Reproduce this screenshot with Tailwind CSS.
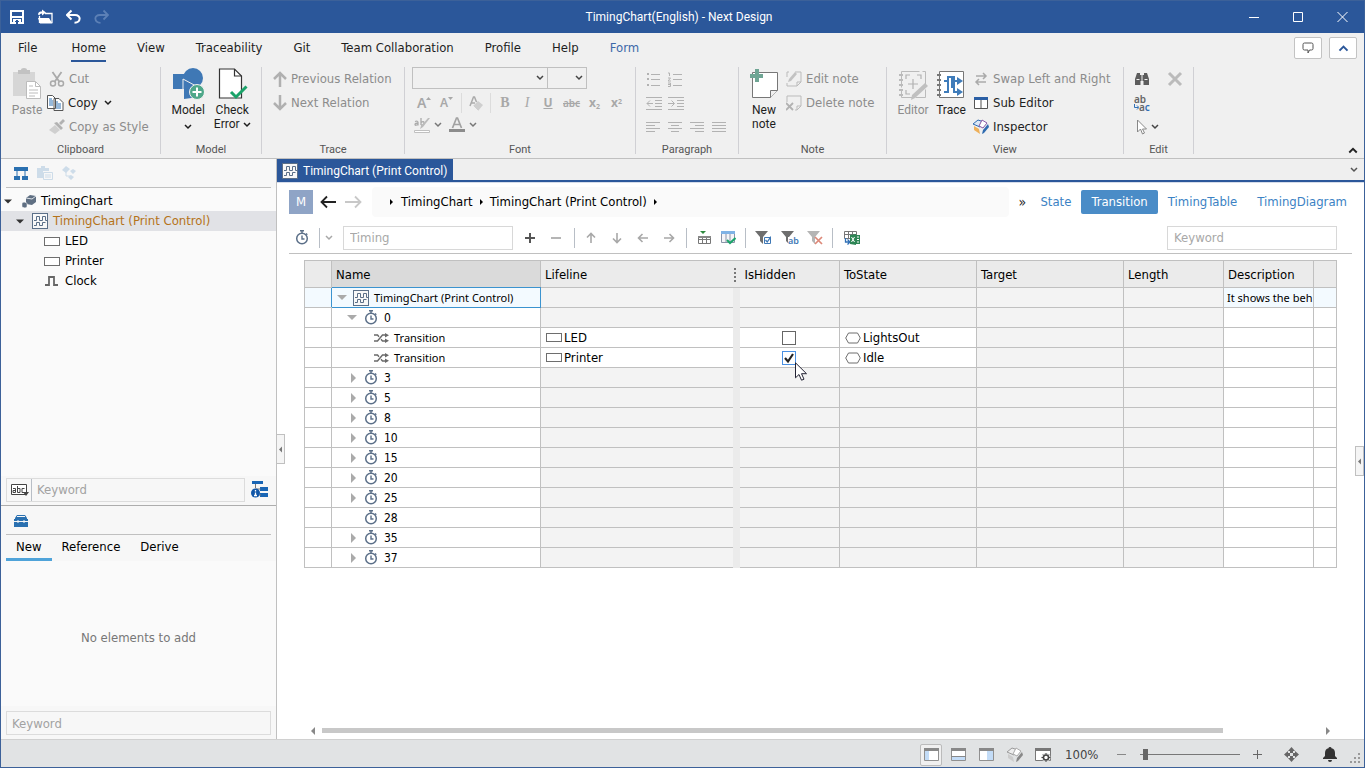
<!DOCTYPE html>
<html lang="en">
<head>
<meta charset="utf-8">
<title>TimingChart(English) - Next Design</title>
<script src="https://cdn.jsdelivr.net/npm/@tailwindcss/browser@4"></script>
</head>
<body class="flex h-screen flex-col overflow-hidden border border-[#3c6199] bg-white font-['DejaVu_Sans_Condensed','DejaVu_Sans','Noto_Sans',sans-serif] text-[13px] leading-5 text-[#1e1e1e]">

<svg class="hidden" aria-hidden="true">
  <symbol id="chev" viewBox="0 0 8 6"><path d="M1 1l3 3 3-3" fill="none" stroke="currentColor" stroke-width="1.5"/></symbol>
  <symbol id="chart" viewBox="0 0 16 16"><rect x=".5" y=".5" width="15" height="15" fill="#f8f8f8" stroke="#5b6f88"/><path d="M2 7.500h2.500v-4h3v4h3v-4h3v4H15M2 12.500h2.500v-3h3v3h3v-3h3" fill="none" stroke="#5b6f88"/></symbol>
  <symbol id="box" viewBox="0 0 16 9"><rect x=".5" y=".5" width="15" height="8" fill="#fff" stroke="#6e6e6e"/></symbol>
  <symbol id="hex" viewBox="0 0 16 12"><path d="M.7 6L3.500 1h9L15.300 6l-2.800 5h-9z" fill="#fff" stroke="#6e6e6e"/></symbol>
  <symbol id="watch" viewBox="0 0 14 15"><circle cx="7" cy="8.500" r="5.300" fill="none" stroke="#5b6f88" stroke-width="1.500"/><path d="M5 .8h4M7 1v2M11 3.500l1.300 1.300M7 5.500v3.500h2.500" fill="none" stroke="#5b6f88" stroke-width="1.400"/></symbol>
  <symbol id="shuffle" viewBox="0 0 15 10"><path d="M0 2h3.500l1.500 1.800M0 8h3.500l5-6H12M7 6.200L8.500 8H12" fill="none" stroke="#6a6a6a" stroke-width="1.400"/><path d="M11 0l4 2.200-4 2.300zM11 5.500l4 2.300-4 2.200z" fill="#6a6a6a"/></symbol>
  <symbol id="down" viewBox="0 0 10 5"><path d="M0 0h10L5 5z" fill="currentColor"/></symbol>
  <symbol id="right" viewBox="0 0 5 10"><path d="M0 0v10l5-5z" fill="currentColor"/></symbol>
  <symbol id="arrow" viewBox="0 0 12 12"><path d="M6 11V1.500M2 5.500l4-4 4 4" fill="none" stroke="currentColor" stroke-width="1.600"/></symbol>
  <symbol id="funnel" viewBox="0 0 16 15"><path d="M0 1h13L8 7v7L5 11V7z" fill="currentColor"/></symbol>
</svg>

<!-- Title bar -->
<header class="flex h-8 shrink-0 items-center bg-[#2b579a] text-white">
  <div class="flex flex-1 items-center gap-[14px] pl-[9px]">
    <button aria-label="Save" class="h-4 w-[14px]"><svg viewBox="0 0 14 16" class="h-4 w-[14px]"><path d="M1 2h12v12H1z" fill="none" stroke="#fff" stroke-width="2"/><path d="M1 8h12M4 14v-3h6v3" fill="none" stroke="#fff" stroke-width="2"/><path d="M6 11h2v4H6z" fill="#2b579a"/></svg></button>
    <button aria-label="Open" class="h-4 w-[15px]"><svg viewBox="0 0 15 16" class="h-4 w-[15px]"><path d="M1.500 14V7M7 4.500h7V14" fill="none" stroke="#fff" stroke-width="1.300"/><path d="M0 9h11l3.500 5.500H2zM0 5.500C0 3 2 2.500 4 2.500V.5l4 3-4 3v-2C2 4.500 1.500 5.500 1.500 6.500z" fill="#fff"/></svg></button>
    <button aria-label="Undo" class="-ml-px h-4 w-[15px]"><svg viewBox="0 0 15 16" class="h-4 w-[15px]"><path d="M1.500 6H9c6.500 0 6 7.500-.5 7.800M5.500 1.500L1 6l4.500 4.500" fill="none" stroke="#fff" stroke-width="2"/></svg></button>
    <button aria-label="Redo" disabled class="-ml-px h-4 w-[15px]"><svg viewBox="0 0 15 16" class="h-4 w-[15px]"><path d="M13.500 6H6c-6.500 0-6 7.500.5 7.800M9.500 1.500L14 6l-4.500 4.500" fill="none" stroke="#5c80b6" stroke-width="1.800"/></svg></button>
  </div>
  <h1 class="font-[Roboto,sans-serif] text-xs">TimingChart(English) - Next Design</h1>
  <div class="flex flex-1 items-center justify-end gap-[34px] pr-4">
    <button aria-label="Minimize" class="h-3 w-[10px]"><svg viewBox="0 0 10 12" class="h-3 w-[10px]"><path d="M0 6.500h10" stroke="#fff"/></svg></button>
    <button aria-label="Maximize" class="h-3 w-[10px]"><svg viewBox="0 0 10 12" class="h-3 w-[10px]"><path d="M.5 1.500h9v9h-9z" stroke="#fff" fill="none"/></svg></button>
    <button aria-label="Close" class="h-3 w-[11px]"><svg viewBox="0 0 11 12" class="h-3 w-[11px]"><path d="M.5 1l10 10M10.500 1l-10 10" stroke="#fff"/></svg></button>
  </div>
</header>

<!-- Menu tabs -->
<nav class="flex h-[29px] shrink-0 items-start bg-[#f0f0f0]">
  <div class="flex flex-1 gap-[31px] pl-[17px]">
    <button class="h-[30px]">File</button>
    <button class="ml-[3px] h-[30px] border-b-3 border-[#2b579a] pt-[3px]">Home</button>
    <button class="h-[30px]">View</button>
    <button class="h-[30px]">Traceability</button>
    <button class="h-[30px]">Git</button>
    <button class="h-[30px]">Team Collaboration</button>
    <button class="h-[30px]">Profile</button>
    <button class="h-[30px]">Help</button>
    <button class="h-[30px] text-[#3d68a8]">Form</button>
  </div>
  <div class="flex gap-[7px] pt-1 pr-[7px]">
    <button aria-label="Comments" class="flex h-[22px] w-7 items-center justify-center rounded-xs border border-[#c3c3c3] bg-white"><svg viewBox="0 0 12 12" class="size-3"><path d="M3 1h6.500q1.500 0 1.500 1.500v4Q11 8 9.500 8H7.500L6 11V8H2.500Q1 8 1 6.500v-4Q1 1 2.500 1z" fill="none" stroke="#555"/></svg></button>
    <button aria-label="Collapse" class="flex h-[22px] w-7 items-center justify-center rounded-xs border border-[#c3c3c3] bg-white text-[#2b579a]"><svg class="h-2 w-[11px] rotate-180"><use href="#chev"/></svg></button>
  </div>
</nav>

<!-- Ribbon -->
<section class="flex h-[97px] shrink-0 border-b border-[#c0c0c0] bg-[#f0f0f0] pt-[5px] pb-1 text-[#8c8c8c]">
  <div class="flex w-[160px] flex-col border-r border-[#d0d0d4]">
    <div class="flex flex-1 pl-3">
      <button disabled class="flex w-7 flex-col items-center gap-[3px] pt-px font-[Roboto,sans-serif] text-xs leading-[14px]">
        <svg viewBox="0 0 28 32" class="h-8 w-7"><path d="M0 4h22v24H0z" fill="#d6d6d6"/><path d="M5 2h3q0-2 3-2t3 2h3v4H5z" fill="#c2c2c2"/><path d="M13.500 13.500h9l5 5v12h-14z" fill="#fff" stroke="#bcbcbc"/><path d="M22.500 13.500v5h5M16 18h4M16 22h9M16 25h9M16 28h6" fill="none" stroke="#bcbcbc"/></svg>Paste</button>
      <div class="flex flex-col pl-2">
        <button disabled class="flex h-6 items-center gap-1"><svg viewBox="0 0 16 16" class="size-4"><circle cx="4" cy="12.500" r="2.500" fill="none" stroke="#aaa" stroke-width="1.500"/><circle cx="12" cy="12.500" r="2.500" fill="none" stroke="#aaa" stroke-width="1.500"/><path d="M3.500 1l7 10M12.500 1l-7 10" stroke="#aaa" stroke-width="1.800"/></svg>Cut</button>
        <button class="-ml-[2px] flex h-6 items-center gap-1 text-[#1e1e1e]"><svg viewBox="0 0 17 16" class="h-4 w-[17px]"><path d="M.5.5h5l3 3v10h-8zM7 3.500h5l4 4v8H7z" fill="#fff" stroke="#555"/><path d="M2 4h3M2 6h4M2 8h4M2 10h4M9 7h2M9 9h5M9 11h5M9 13h5" stroke="#2f72b5"/></svg>Copy<svg class="ml-[2px] h-[6px] w-2"><use href="#chev"/></svg></button>
        <button disabled class="flex h-6 items-center gap-1"><svg viewBox="0 0 16 16" class="size-4"><path d="M0 11l6-5 5 5-5 4z" fill="#cfcfcf"/><path d="M5 4l3-1 6 6-2 2zM10 4l4-4 2 2-4 4z" fill="#b2b2b2"/></svg>Copy as Style</button>
      </div>
    </div>
    <div class="-mb-1 text-center font-[Roboto,sans-serif] text-[11px] leading-4 text-[#555]">Clipboard</div>
  </div>
  <div class="flex w-[101px] flex-col border-r border-[#d0d0d4] text-[#1e1e1e]">
    <div class="flex flex-1 items-start justify-center gap-[9px]">
      <button class="flex flex-col items-center gap-[3px] pt-px font-[Roboto,sans-serif] text-xs leading-[14px]"><svg viewBox="0 0 32 32" class="size-8"><circle cx="21" cy="10" r="10" fill="#3f78b5"/><path d="M1 6h14v15H1zM12 17l10-5 5 17-15 2z" fill="#3f78b5"/><path d="M11 22V11l13 7" fill="none" stroke="#f0f0f0"/><circle cx="25" cy="24" r="7.500" fill="#4fa88a" stroke="#f0f0f0"/><path d="M25 19.500v9M20.500 24h9" stroke="#fff" stroke-width="2"/></svg>Model<svg class="mt-1 h-[6px] w-2"><use href="#chev"/></svg></button>
      <button class="flex flex-col items-center gap-[3px] pt-px font-[Roboto,sans-serif] text-xs leading-[14px]"><svg viewBox="0 0 32 32" class="size-8"><path d="M3.500 1h15l7 7v22h-22z" fill="#fff" stroke="#333" stroke-width="1.200"/><path d="M18.500 1v7h7" fill="none" stroke="#333" stroke-width="1.200"/><path d="M15 24l5 5L30.500 18.500" fill="none" stroke="#1ba36a" stroke-width="3"/></svg><span class="whitespace-nowrap">Check<br>Error <svg class="inline h-[6px] w-2"><use href="#chev"/></svg></span></button>
    </div>
    <div class="-mb-1 text-center font-[Roboto,sans-serif] text-[11px] leading-4 text-[#555]">Model</div>
  </div>
  <div class="flex w-[143px] flex-col border-r border-[#d0d0d4]">
    <div class="flex flex-1 flex-col items-start pl-[11px]">
      <button disabled class="flex h-6 items-center gap-1"><svg viewBox="0 0 14 16" class="h-4 w-[14px]"><path d="M7 16V2M1 8l6-6 6 6" fill="none" stroke="#b0b0b0" stroke-width="2.500"/></svg>Previous Relation</button>
      <button disabled class="flex h-6 items-center gap-1"><svg viewBox="0 0 14 16" class="h-4 w-[14px]"><path d="M7 0v14M1 8l6 6 6-6" fill="none" stroke="#b0b0b0" stroke-width="2.500"/></svg>Next Relation</button>
    </div>
    <div class="-mb-1 text-center font-[Roboto,sans-serif] text-[11px] leading-4 text-[#555]">Trace</div>
  </div>
  <div class="flex w-[231px] flex-col border-r border-[#d0d0d4]">
    <div class="flex flex-1 flex-col pl-[7px]">
      <div class="flex h-[22px] w-[175px] text-[#444]">
        <div class="relative flex w-[136px]"><select aria-label="Font family" class="h-[22px] w-full appearance-none border border-[#c0c0c0] bg-[#f0f0f0]"></select><svg class="pointer-events-none absolute top-2 right-1 h-[6px] w-2"><use href="#chev"/></svg></div>
        <div class="relative -ml-px flex w-10"><select aria-label="Font size" class="h-[22px] w-full appearance-none border border-[#c0c0c0] bg-[#f0f0f0]"></select><svg class="pointer-events-none absolute top-2 right-1 h-[6px] w-2"><use href="#chev"/></svg></div>
      </div>
      <div class="flex h-6 items-center gap-[10px] pt-1 pl-[5px] font-['Noto_Sans',sans-serif] leading-5 text-[#a8a8a8]">
        <button disabled aria-label="Grow font" class="flex w-[13px] items-center text-[14px] font-semibold">A<svg viewBox="0 0 5 12" class="h-3 w-[5px] shrink-0"><path d="M0 3h5L2.500 0z" fill="#a8a8a8"/></svg></button>
        <button disabled aria-label="Shrink font" class="flex w-[13px] items-center text-xs font-semibold">A<svg viewBox="0 0 5 12" class="h-3 w-[5px] shrink-0"><path d="M0 0h5L2.500 3z" fill="#a8a8a8"/></svg></button>
        <span class="-mx-[2px] h-5 w-px bg-[#dcdcdc]"></span>
        <button disabled aria-label="Clear formatting" class="-mx-px"><svg viewBox="0 0 14 15" class="h-[15px] w-[14px]"><path d="M1 10L4.500 1h1l2 5M2.500 7H6" fill="none" stroke="#aaa" stroke-width="1.500"/><path d="M4 10l5-5 5 4-5 6z" fill="#cfcfcf"/><path d="M4 10l5 5" stroke="#f0f0f0"/></svg></button>
        <span class="-mx-[2px] h-5 w-px bg-[#dcdcdc]"></span>
        <button disabled class="w-3 font-['Liberation_Serif',serif] text-[14px] font-bold">B</button>
        <button disabled class="w-3 font-['Liberation_Serif',serif] text-[14px] italic">I</button>
        <button disabled class="w-[10px] text-xs font-bold underline">U</button>
        <button disabled class="w-4 text-[10px] font-semibold line-through">abc</button>
        <button disabled class="w-3 text-left text-xs font-bold">x<sub class="text-[7px]">2</sub></button>
        <button disabled class="w-3 text-left text-xs font-bold">x<sup class="text-[7px]">2</sup></button>
      </div>
      <div class="flex h-6 items-center gap-[5px] pl-[2px] text-[#777]">
        <button disabled aria-label="Highlight" class="flex items-center gap-1"><svg viewBox="0 0 16 16" class="size-4"><path d="M.5 13.500h15v2H.5z" fill="#fff" stroke="#c0c0c0"/><path d="M1 4.500q3-1 3 1v3M4 6q-3 0-3 1.500T4 7.500M7 1v7M7 5.500q3-2 3 .5T7 8" fill="none" stroke="#aaa" stroke-width="1.300"/><path d="M16 1L9 10l-3 2 1-3 7-8z" fill="#bbb"/></svg><svg class="h-[6px] w-2"><use href="#chev"/></svg></button>
        <button disabled aria-label="Font colour" class="flex items-center gap-1 pl-[2px]"><svg viewBox="0 0 16 16" class="size-4"><path d="M3.500 11L7.500 1h1l4 10M5 7.500h6" fill="none" stroke="#a2a2a2" stroke-width="1.700"/><path d="M0 12h16v3H0z" fill="#8c8c8c"/></svg><svg class="h-[6px] w-2"><use href="#chev"/></svg></button>
      </div>
    </div>
    <div class="-mb-1 text-center font-[Roboto,sans-serif] text-[11px] leading-4 text-[#555]">Font</div>
  </div>
  <div class="flex w-[103px] flex-col border-r border-[#d0d0d4] text-[#b2b2b2]">
    <div class="flex flex-1 flex-col pl-[10px]">
      <div class="flex h-6 items-center gap-[7px]">
        <button disabled aria-label="Bullets"><svg viewBox="0 0 15 15" class="size-[15px]"><path d="M5 2.500h9M5 7.500h9M5 13.500h9" stroke="currentColor"/><path d="M1 1h2v2H1zM1 6h2v2H1zM1 12h2v2H1z" fill="currentColor"/></svg></button>
        <button disabled aria-label="Numbering"><svg viewBox="0 0 15 15" class="size-[15px]"><path d="M5 2.500h9M5 7.500h9M5 13.500h9M0 1h1.500v3M0 6h2.500L0 9h3M0 11h2.500v3.500H0M0 12.500h2.500" fill="none" stroke="currentColor"/></svg></button>
      </div>
      <div class="flex h-6 items-center gap-[6px]">
        <button disabled aria-label="Decrease indent"><svg viewBox="0 0 16 14" class="h-[14px] w-4"><path d="M0 1.500h16M9 4.500h7M9 7.500h7M9 10.500h7M0 13.500h16M1 7.500h6M4 4.500l-3 3 3 3" fill="none" stroke="currentColor"/></svg></button>
        <button disabled aria-label="Increase indent"><svg viewBox="0 0 16 14" class="h-[14px] w-4"><path d="M0 1.500h16M9 4.500h7M9 7.500h7M9 10.500h7M0 13.500h16M0 7.500h6M3.500 4.500l3 3-3 3" fill="none" stroke="currentColor"/></svg></button>
      </div>
      <div class="flex h-6 items-center gap-2">
        <button disabled aria-label="Align left"><svg viewBox="0 0 14 10" class="h-[10px] w-[14px]"><path d="M0 .5h14M0 3.500h9M0 6.500h14M0 9.500h9" stroke="currentColor"/></svg></button>
        <button disabled aria-label="Centre"><svg viewBox="0 0 14 10" class="h-[10px] w-[14px]"><path d="M0 .5h14M3 3.500h8M0 6.500h14M3 9.500h8" stroke="currentColor"/></svg></button>
        <button disabled aria-label="Align right"><svg viewBox="0 0 14 10" class="h-[10px] w-[14px]"><path d="M0 .5h14M5 3.500h9M0 6.500h14M5 9.500h9" stroke="currentColor"/></svg></button>
        <button disabled aria-label="Justify"><svg viewBox="0 0 14 10" class="h-[10px] w-[14px]"><path d="M0 .5h14M0 3.500h14M0 6.500h14M0 9.500h14" stroke="currentColor"/></svg></button>
      </div>
    </div>
    <div class="-mb-1 text-center font-[Roboto,sans-serif] text-[11px] leading-4 text-[#555]">Paragraph</div>
  </div>
  <div class="flex w-[148px] flex-col border-r border-[#d0d0d4]">
    <div class="flex flex-1 items-start gap-2 pl-[11px]">
      <button class="flex w-7 flex-col items-center gap-[3px] pt-px font-[Roboto,sans-serif] text-xs leading-[14px] text-[#1e1e1e]"><svg viewBox="0 0 28 32" class="h-8 w-7"><path d="M2.500 4.500h25v18l-7 7h-18z" fill="#fff" stroke="#777"/><path d="M27.500 22.500h-7v7" fill="#f0f0f0" stroke="#777"/><path d="M0 6h5V1h4v5h4v4H9v4H5v-4H0z" fill="#6fa594"/></svg>New note</button>
      <div class="flex flex-col items-start">
        <button disabled class="flex h-6 items-center gap-1"><svg viewBox="0 0 16 16" class="size-4"><path d="M1 6V1h2M9 1h6v10l-4 4H1v-3M15 11h-4v4" fill="none" stroke="#bbb"/><path d="M9 1l2 2-6 7-3 1 1-3z" fill="#c2c2c2"/></svg>Edit note</button>
        <button disabled class="flex h-6 items-center gap-1"><svg viewBox="0 0 16 16" class="size-4"><path d="M1 7V1h14v10l-4 4H9M15 11h-4v4" fill="none" stroke="#bbb"/><path d="M0 8l7 7M7 8l-7 7" stroke="#b2b2b2" stroke-width="1.800"/></svg>Delete note</button>
      </div>
    </div>
    <div class="-mb-1 text-center font-[Roboto,sans-serif] text-[11px] leading-4 text-[#555]">Note</div>
  </div>
  <div class="flex w-[237px] flex-col border-r border-[#d0d0d4]">
    <div class="flex flex-1 items-start pl-[10px]">
      <button disabled class="flex w-8 flex-col items-center gap-[3px] pt-px font-[Roboto,sans-serif] text-xs leading-[14px]"><svg viewBox="0 0 32 32" class="size-8"><path d="M4.500 3.500h24v26h-24z" fill="none" stroke="#bbb" stroke-dasharray="18 3"/><path d="M2 7h4M2 12h4M2 17h4M2 22h4M2 27h4" stroke="#bbb" stroke-width="2"/><path d="M9 11V7h4M20 7h4v4M9 22v4h4M16 11v10M11 16h10" fill="none" stroke="#b2b2b2" stroke-width="1.200"/><path d="M28 15l3 3-13 12-4 2 1-5z" fill="#c0c0c0"/></svg>Editor</button>
      <button class="ml-[6px] flex w-8 flex-col items-center gap-[3px] pt-px font-[Roboto,sans-serif] text-xs leading-[14px] text-[#1e1e1e]"><svg viewBox="0 0 32 32" class="size-8"><path d="M4.500 3.500h24v26h-24z" fill="#fff" stroke="#777"/><path d="M2 7h4M2 12h4M2 17h4M2 22h4M2 27h4" stroke="#777" stroke-width="2"/><path d="M9 24h4V9h6v15h5M9 13h3M16 13h8M17 20V9" fill="none" stroke="#3f7cba" stroke-width="2"/><path d="M22 9l6 4-6 4zM22 20l6 4-6 4z" fill="#3f7cba"/></svg>Trace</button>
      <div class="flex flex-col items-start pl-[6px]">
        <button disabled class="flex h-6 items-center gap-1"><svg viewBox="0 0 16 16" class="size-4"><path d="M3 5h9M10 2l3 3-3 3M13 11H4M6 8l-3 3 3 3" fill="none" stroke="#aaa" stroke-width="1.500"/></svg>Swap Left and Right</button>
        <button class="flex h-6 items-center gap-1 text-[#1e1e1e]"><svg viewBox="0 0 16 16" class="size-4"><path d="M1.500 2.500h13v11h-13zM8 4v10" fill="#fff" stroke="#555"/><path d="M1 2h14v3H1z" fill="#2b5fa5"/></svg>Sub Editor</button>
        <button class="flex h-6 items-center gap-1 text-[#1e1e1e]"><svg viewBox="0 0 16 16" class="size-4"><path d="M0 5l5-4 6 2-4 5z" fill="#dce8f5" stroke="#2f6bb0"/><path d="M9 1l5 3-4 5-4-2z" fill="#fff" stroke="#875aa5"/><path d="M1 7l5 3 1 5-6-4z" fill="#eeb05a"/><path d="M9 15l1-4 5-6 1 3-5 6z" fill="#2f6bb0"/></svg>Inspector</button>
      </div>
    </div>
    <div class="-mb-1 text-center font-[Roboto,sans-serif] text-[11px] leading-4 text-[#555]">View</div>
  </div>
  <div class="flex w-[70px] flex-col border-r border-[#d0d0d4]">
    <div class="grid flex-1 grid-cols-[16px_16px] grid-rows-[24px_24px_24px] items-center gap-x-[17px] pl-[10px]">
      <button aria-label="Find"><svg viewBox="0 0 16 16" class="size-4"><path d="M3 2h3v2h4V2h3l2 6v6H9.500v-4h-3v4H1V8z" fill="#5d5d5d"/><path d="M8 4v6M2.500 8.500h3M10.500 8.500h3" stroke="#f0f0f0"/></svg></button>
      <button disabled aria-label="Delete"><svg viewBox="0 0 16 16" class="size-4"><path d="M2 2l12 12M14 2L2 14" stroke="#bbb" stroke-width="3"/></svg></button>
      <button aria-label="Replace" class="h-4 font-['Noto_Sans',sans-serif] text-[10px] leading-[8px] font-semibold text-[#666]"><span class="block text-left">ab</span><span class="flex items-center"><svg viewBox="0 0 5 6" class="h-[6px] w-[5px]"><path d="M.5 0v3.500h4M3 1.500l2 2-2 2" fill="none" stroke="#2f6fb5"/></svg>a<span class="text-[#2f6fb5]">c</span></span></button><span></span>
      <button aria-label="Select" class="col-span-2 flex items-center gap-px"><svg viewBox="0 0 16 16" class="size-4"><path d="M3.500 1v12l3-3 2 5 2-1-2-4h4z" fill="#fff" stroke="#888"/></svg><svg class="h-[6px] w-2 text-[#444]"><use href="#chev"/></svg></button>
    </div>
    <div class="-mb-1 text-center font-[Roboto,sans-serif] text-[11px] leading-4 text-[#555]">Edit</div>
  </div>
  <button aria-label="Collapse ribbon" class="ml-auto self-end pr-[6px] text-[#222]"><svg class="h-2 w-[10px] rotate-180"><use href="#chev"/></svg></button>
</section>

<div class="flex min-h-0 flex-1">
  <!-- Navigator -->
  <aside class="flex w-[276px] shrink-0 flex-col border-r border-[#c0c0c0] bg-[#f7f7f7]">
    <div class="mx-[5px] flex h-[29px] shrink-0 items-center gap-[9px] border-b border-[#c0c0c0] pl-2">
      <button aria-label="Model view"><svg viewBox="0 0 14 13" class="h-[13px] w-[14px]"><path d="M0 0h14v4H0zM0 9h6v4H0zM8 9h6v4H8z" fill="#2a70b0"/><path d="M3 4v5M11 4v5" stroke="#2a70b0"/></svg></button>
      <button disabled aria-label="Document view"><svg viewBox="0 0 16 14" class="h-[14px] w-4"><path d="M0 2h4V0h4v2h4v3H6v7H0z" fill="#cddce9"/><path d="M6.500 6.500h9v7h-9zM8 9h6M8 11h6" fill="#f7f7f7" stroke="#cddce9"/></svg></button>
      <button disabled aria-label="Relation view"><svg viewBox="0 0 14 14" class="size-[14px]"><path d="M0 4l4-4 4 3-4 4zM8 5l3-2 3 2-3 3zM6 11l3-2 3 2-3 3z" fill="#cddce9"/><path d="M4 5v5h5" fill="none" stroke="#cddce9"/></svg></button>
    </div>
    <ul class="flex-1 bg-[#fafafa] pt-[3px] text-black">
      <li class="flex h-5 items-center pl-[3px]"><svg class="h-[5px] w-2 text-[#333]"><use href="#down"/></svg><svg viewBox="0 0 14 14" class="mr-[5px] ml-[10px] size-[14px]"><path d="M4 4l4-3 6 1v6l-4 3-6-1z" fill="#5f6f82"/><path d="M4 4l6 1 4-3" fill="none" stroke="#dfe4ea"/><path d="M0 9l2-1 3 1v4l-2 1-3-1z" fill="#5f6f82" stroke="#fafafa" stroke-width=".5"/></svg>TimingChart</li>
      <li class="flex h-5 items-center bg-[#e1e2e6] pl-[15px] text-[#b5731a]"><svg class="h-[5px] w-2 text-[#333]"><use href="#down"/></svg><svg class="mr-[5px] ml-2 size-4"><use href="#chart"/></svg>TimingChart (Print Control)</li>
      <li class="flex h-5 items-center pl-[43px]"><svg class="mr-[5px] h-[9px] w-4"><use href="#box"/></svg>LED</li>
      <li class="flex h-5 items-center pl-[43px]"><svg class="mr-[5px] h-[9px] w-4"><use href="#box"/></svg>Printer</li>
      <li class="flex h-5 items-center pl-[43px]"><svg viewBox="0 0 16 10" class="mr-[5px] h-[10px] w-4"><path d="M1 9h4V1h5v8h4" fill="none" stroke="#666" stroke-width="1.800"/></svg>Clock</li>
    </ul>
    <div class="flex h-[29px] shrink-0 items-center bg-[#f7f7f7] pr-2 pb-[2px] pl-[5px]">
      <div class="flex h-6 flex-1 items-center border border-[#dcdcdc] pl-1">
        <button aria-label="Search mode"><svg viewBox="0 0 18 12" class="h-3 w-[18px]"><path d="M.5.5h15v10H.5z" fill="#fff" stroke="#444"/><path d="M2 4.500h2.500v4H2v-2h2.500M6.500 2v6.500H9v-4H6.500M13.500 4.500H11v4h2.500" fill="none" stroke="#444"/><path d="M12 8h6l-3 4z" fill="#444"/></svg></button>
        <span class="ml-[2px] h-[22px] w-px bg-[#b8bec6]"></span>
        <input aria-label="Search keyword" placeholder="Keyword" class="min-w-0 flex-1 bg-transparent pl-[5px] outline-none placeholder:text-[#a2a2a2]">
      </div>
      <button aria-label="Search settings" class="ml-[6px]"><svg viewBox="0 0 17 17" class="size-[17px]"><path d="M1 0h11v3H1zM9 6h8v4H9zM9 12h8v4H9z" fill="#1a66b5"/><path d="M4.500 3v4M4.500 8h5M8 14h2" stroke="#777"/><circle cx="4.500" cy="12" r="4.500" fill="#1257a8"/><path d="M4.500 9v1.500M4.500 11.500V15M3 14.500h3" stroke="#fff" stroke-width="1.300"/></svg></button>
    </div>
    <div class="shrink-0 border-t border-[#adadad] bg-[#f7f7f7] px-[5px]">
      <div class="flex h-[29px] items-center border-b border-[#c0c0c0] pl-2"><svg viewBox="0 0 14 13" class="h-[13px] w-[14px]"><path d="M3 1h8l2 3v1h1v2H0V5h1V4zM0 8h14v5H0z" fill="#2a70b0"/><path d="M3 2.500h8M4 6v3M10 6v3M4 7.500h6" stroke="#f7f7f7"/></svg></div>
      <div class="flex gap-[10px] text-black">
        <button class="h-[26px] border-b-3 border-[#4fa3d9] px-[10px]">New</button>
        <button class="h-[26px] border-b-3 border-transparent">Reference</button>
        <button class="ml-[10px] h-[26px] border-b-3 border-transparent">Derive</button>
      </div>
    </div>
    <div class="flex h-[145px] shrink-0 items-center justify-center bg-[#fafafa] pt-2 text-[#777]">No elements to add</div>
    <div class="shrink-0 px-[5px] pt-[5px] pb-1"><input aria-label="Element keyword" placeholder="Keyword" class="h-6 w-full border border-[#dcdcdc] bg-transparent px-[5px] outline-none placeholder:text-[#a2a2a2]"></div>
  </aside>

  <!-- Editor -->
  <main class="relative flex min-w-0 flex-1 flex-col">
    <div class="flex h-[23px] shrink-0 items-start border-b-2 border-[#2b579a] bg-[#efefef]">
      <button class="flex h-[22px] items-center gap-[5px] bg-[#2b579a] pt-px pr-[6px] pl-[5px] font-[Roboto,sans-serif] text-xs text-white"><svg class="size-4"><use href="#chart"/></svg>TimingChart (Print Control)</button>
      <button aria-label="Tab list" class="ml-auto self-center pr-[6px] text-[#555]"><svg class="h-[6px] w-2"><use href="#chev"/></svg></button>
    </div>
    <div class="flex h-10 shrink-0 items-center border-t border-[#d5dcea] pr-[17px] pb-px pl-3">
      <span class="flex size-6 items-center justify-center bg-[#8fa4c6] text-white">M</span>
      <button aria-label="Back" class="ml-[7px]"><svg viewBox="0 0 17 14" class="h-[14px] w-[17px]"><path d="M1.500 7H16M7 1.500L1.500 7 7 12.500" fill="none" stroke="#222" stroke-width="1.800"/></svg></button>
      <button aria-label="Forward" disabled class="ml-2"><svg viewBox="0 0 17 14" class="h-[14px] w-[17px]"><path d="M0 7h15M10 1.500L15.500 7 10 12.500" fill="none" stroke="#c8c8c8" stroke-width="1.800"/></svg></button>
      <div class="ml-[10px] flex h-[30px] flex-1 items-center rounded-sm bg-[#fafafa] pl-[18px] text-black">
        <svg class="mr-2 h-[6px] w-[3px]"><use href="#right"/></svg><a href="#tc">TimingChart</a><svg class="mx-[7px] h-[6px] w-[3px]"><use href="#right"/></svg><a href="#pc">TimingChart (Print Control)</a><svg class="mx-[7px] h-[6px] w-[3px]"><use href="#right"/></svg>
      </div>
      <span class="ml-[9px] w-2 text-sm">»</span>
      <div class="ml-[14px] flex gap-[10px] text-[#3b82c4]">
        <button class="h-6">State</button>
        <button class="h-6 rounded-xs bg-[#4a8cc7] px-[10px] text-white">Transition</button>
        <button class="h-6">TimingTable</button>
        <button class="ml-[10px] h-6">TimingDiagram</button>
      </div>
    </div>
    <div class="mr-3 ml-3 flex h-8 shrink-0 items-center border-b border-[#c0c0c0] pr-[15px] text-[#a8a8a8]">
      <button aria-label="Timing" class="ml-[6px]"><svg class="h-[15px] w-[14px]"><use href="#watch"/></svg></button>
      <span class="ml-[10px] h-5 w-px bg-[#b8bec6]"></span>
      <button aria-label="Choose type" class="ml-[5px]"><svg class="h-[6px] w-2"><use href="#chev"/></svg></button>
      <input aria-label="Timing" placeholder="Timing" class="ml-[10px] h-6 w-[170px] border border-[#d8d8d8] px-[6px] outline-none placeholder:text-[#a8a8a8]">
      <button aria-label="Add" class="ml-3"><svg viewBox="0 0 10 10" class="size-[10px]"><path d="M5 0v10M0 5h10" stroke="#555" stroke-width="2"/></svg></button>
      <button aria-label="Remove" class="ml-4"><svg viewBox="0 0 10 10" class="size-[10px]"><path d="M0 5h10" stroke="#b5b5b5" stroke-width="2"/></svg></button>
      <span class="ml-[13px] h-5 w-px bg-[#b8bec6]"></span>
      <div class="ml-[10px] flex gap-[14px]">
        <button aria-label="Move up"><svg class="size-3"><use href="#arrow"/></svg></button>
        <button aria-label="Move down"><svg class="size-3 rotate-180"><use href="#arrow"/></svg></button>
        <button aria-label="Move left"><svg class="size-3 -rotate-90"><use href="#arrow"/></svg></button>
        <button aria-label="Move right"><svg class="size-3 rotate-90"><use href="#arrow"/></svg></button>
      </div>
      <span class="ml-[11px] h-5 w-px bg-[#b8bec6]"></span>
      <button aria-label="Column options" class="ml-[11px]"><svg viewBox="0 0 14 14" class="size-[14px]"><path d="M2 0h6L5 3z" fill="#2f8a3f"/><path d="M.5 5.500h12v7H.5zM4.500 7v5M8.500 7v5M0 8.500h13" fill="none" stroke="#777"/><path d="M0 5h13v2H0z" fill="#888"/></svg></button>
      <button aria-label="Validate" class="ml-[9px]"><svg viewBox="0 0 15 14" class="h-[14px] w-[15px]"><path d="M.5.5h13v11H.5zM5 3v9M9 3v9" fill="#f4f4f8" stroke="#8a94a8"/><path d="M0 0h14v3H0z" fill="#7fb2e5"/><path d="M6 9l3 3 5.500-5" fill="none" stroke="#1ba36a" stroke-width="2"/></svg></button>
      <span class="ml-[9px] h-5 w-px bg-[#b8bec6]"></span>
      <button aria-label="Filter by check" class="ml-[9px] text-[#6e6e6e]"><svg viewBox="0 0 16 15" class="h-[15px] w-4"><use href="#funnel" width="16" height="15"/><path d="M9.500 7.500h6v6h-6z" fill="#fff" stroke="#3f78b5"/><path d="M10.500 10l1.700 2L16 6.500" fill="none" stroke="#3f78b5" stroke-width="1.300"/></svg></button>
      <button aria-label="Filter by text" class="ml-[10px] flex text-[#6e6e6e]"><svg class="h-[15px] w-[8px] shrink-0 overflow-visible" viewBox="0 0 8 15"><use href="#funnel" width="16" height="15"/></svg><span class="-ml-px self-end bg-white font-['Noto_Sans',sans-serif] text-[9px] leading-[8px] font-semibold text-[#3f78b5]">ab</span></button>
      <button aria-label="Clear filter" class="ml-[8px] text-[#b5b5b5]"><svg viewBox="0 0 16 15" class="h-[15px] w-4"><use href="#funnel" width="16" height="15"/><path d="M8 7l7 7M15 7l-7 7" stroke="#dd8878" stroke-width="1.700"/></svg></button>
      <span class="ml-[9px] h-5 w-px bg-[#b8bec6]"></span>
      <button aria-label="Export to Excel" class="ml-[11px]"><svg viewBox="0 0 16 15" class="h-[15px] w-4"><path d="M.5 1.500h12v7H.5zM.5 4.500h12M4.500 2v6M8.500 2v6" fill="none" stroke="#777"/><path d="M1.500 8v4h4M3.500 9.500l2.500 2.500-2.500 2.500" fill="none" stroke="#2f6fb5" stroke-width="1.300"/><path d="M6 5l6-1v11l-6-1zM12 5h4v9h-4z" fill="#2e8555"/><path d="M7.500 7l3 5M10.500 7l-3 5M13 7h2M13 9.500h2M13 12h2" stroke="#fff"/></svg></button>
      <input aria-label="Filter keyword" placeholder="Keyword" class="ml-auto h-6 w-[170px] border border-[#d8d8d8] px-[6px] outline-none placeholder:text-[#a8a8a8]">
    </div>

    <div class="min-h-0 flex-1 overflow-hidden pt-[6px] pr-[27px] pl-[27px]">
      <table class="w-full table-fixed border-collapse leading-[19px] text-black [&_td]:h-5 [&_td]:border [&_td]:border-[#c0c0c0] [&_td]:p-0 [&_td:nth-child(3)]:border-r-0 [&_td:nth-child(5)]:border-l-0 [&_th]:border [&_th]:border-[#c0c0c0]">
        <colgroup><col class="w-[27px]"><col class="w-[209px]"><col class="w-[192px]"><col class="w-[7px]"><col class="w-[100px]"><col class="w-[137px]"><col class="w-[147px]"><col class="w-[100px]"><col><col class="w-[23px]"></colgroup>
        <thead><tr class="h-[27px] bg-[#ebebeb] text-left [&_th]:px-1 [&_th]:pt-px [&_th]:font-normal">
          <th></th><th class="border-b-[#3b93cf]! bg-[#dadada]">Name</th><th class="border-r-0!">Lifeline</th><th class="border-x-0! px-0!"><svg viewBox="0 0 7 14" class="h-[14px] w-[7px]"><path d="M1 0h2v2H1zM1 4h2v2H1zM1 8h2v2H1zM1 12h2v2H1z" fill="#777"/></svg></th><th class="border-l-0! pl-[5px]!">IsHidden</th><th>ToState</th><th>Target</th><th>Length</th><th>Description</th><th></th>
        </tr></thead>
        <tbody id="rows"></tbody>
      </table>
    </div>

    <div class="flex h-[17px] shrink-0 items-center px-[34px] text-[#888]">
      <svg class="h-2 w-1 rotate-180"><use href="#right"/></svg>
      <div class="ml-[7px] flex-1 pr-[103px]"><div class="h-[5px] bg-[#c8c8c8]"></div></div>
      <svg class="h-2 w-1"><use href="#right"/></svg>
    </div>

    <button aria-label="Collapse left pane" class="absolute top-[275px] left-0 flex h-[30px] w-2 items-center justify-center border border-l-0 border-[#c0c0c0] bg-[#f5f5f5] text-[#777]"><svg class="h-[7px] w-[3px] rotate-180"><use href="#right"/></svg></button>
    <button aria-label="Expand right pane" class="absolute top-[287px] right-0 flex h-[30px] w-[9px] items-center justify-center border border-[#c0c0c0] bg-[#f5f5f5] text-[#777]"><svg class="h-[7px] w-[3px] rotate-180"><use href="#right"/></svg></button>
    <!-- Mouse pointer -->
    <svg viewBox="0 0 12 19" class="pointer-events-none absolute top-[203px] left-[518px] h-[19px] w-3"><path d="M.5.8v15l3.500-3.300 2.500 5.700 2.500-1-2.500-5.500h5z" fill="#fff" stroke="#223"/></svg>
  </main>
</div>

<!-- Status bar -->
<footer class="flex h-7 shrink-0 items-center justify-end border-t border-[#d0d0d0] bg-[#e1e3e4] pt-[2px] text-[#444]">
  <button aria-label="Navigator pane" class="flex h-[22px] w-[22px] items-center justify-center rounded-xs border border-[#bbb] bg-[#f0f0f0]"><svg viewBox="0 0 15 13" class="h-[13px] w-[15px]"><path d="M.5.500h14v12H.5z" fill="#fff" stroke="#909090"/><path d="M1 3h4v9H1z" fill="#c3dcf7"/><path d="M0 0h15v3H0z" fill="#888"/></svg></button>
  <button aria-label="Bottom pane" class="ml-[9px]"><svg viewBox="0 0 15 13" class="h-[13px] w-[15px]"><path d="M.5.500h14v12H.5z" fill="#fff" stroke="#909090"/><path d="M1 8h13v4H1z" fill="#c3dcf7"/><path d="M0 0h15v3H0zM0 8h15v1H0z" fill="#888"/></svg></button>
  <button aria-label="Right pane" class="ml-[13px]"><svg viewBox="0 0 15 13" class="h-[13px] w-[15px]"><path d="M.5.500h14v12H.5z" fill="#fff" stroke="#909090"/><path d="M8 3h6v9H8z" fill="#c3dcf7"/><path d="M0 0h15v3H0z" fill="#888"/></svg></button>
  <button aria-label="Inspector" class="ml-[13px]"><svg viewBox="0 0 16 16" class="size-4"><path d="M0 5l5-4 6 2-4 5z" fill="#eee" stroke="#999"/><path d="M9 1l5 3-4 5-4-2z" fill="#fff" stroke="#aaa"/><path d="M1 7l5 3 1 5-6-4z" fill="#ccc"/><path d="M9 15l1-4 5-6 1 3-5 6z" fill="#888"/></svg></button>
  <button aria-label="View settings" class="ml-3"><svg viewBox="0 0 16 14" class="h-[14px] w-4"><path d="M.5 1.500h15v11H.5z" fill="#fff" stroke="#777"/><path d="M0 0h16v3H0z" fill="#777"/><circle cx="11" cy="9.500" r="4.500" fill="#e1e3e4"/><circle cx="11" cy="9.500" r="2.500" fill="#fff" stroke="#444" stroke-width="1.500"/><path d="M11 5v1.500M11 12.500V14M6.500 9.500H8M14 9.500h1.500M8 6.500l1 1M13 11.500l1 1M14 6.500l-1 1M9 11.500l-1 1" stroke="#444"/></svg></button>
  <output class="ml-[14px] w-9">100%</output>
  <button aria-label="Zoom out" class="ml-4"><svg viewBox="0 0 9 9" class="size-[9px]"><path d="M0 4.500h9" stroke="#888"/></svg></button>
  <input type="range" aria-label="Zoom" min="0" max="100" value="3" class="ml-[14px] h-3 w-[100px] appearance-none bg-[linear-gradient(#777,#777)] bg-[length:100%_1px] bg-center bg-no-repeat [&::-webkit-slider-thumb]:h-[11px] [&::-webkit-slider-thumb]:w-[5px] [&::-webkit-slider-thumb]:appearance-none [&::-webkit-slider-thumb]:bg-[#666]">
  <button aria-label="Zoom in" class="ml-[13px]"><svg viewBox="0 0 9 9" class="size-[9px]"><path d="M0 4.500h9M4.500 0v9" stroke="#666"/></svg></button>
  <button aria-label="Fit" class="ml-[22px]"><svg viewBox="0 0 15 15" class="size-[15px]"><path d="M7.500 0l3.500 4h-2v2H6V4H4zM7.500 15l3.500-4h-2V9H6v2H4zM0 7.500L4 4v2h2v3H4v2zM15 7.500L11 4v2H9v3h2v2z" fill="#666"/><path d="M6 6h3v3H6z" fill="#e1e3e4"/></svg></button>
  <button aria-label="Notifications" class="ml-6"><svg viewBox="0 0 14 15" class="h-[15px] w-[14px]"><path d="M7 0q1.500 0 1.500 1.300Q12 2 12 6v3l2 2v1H0v-1l2-2V6q0-4 3.500-4.700Q5.500 0 7 0zM5 13h4q0 2-2 2t-2-2z" fill="#333"/></svg></button>
  <svg viewBox="0 0 11 11" class="mt-2 mr-[3px] ml-[13px] size-[11px]"><path d="M8 0h2v2H8zM4 4h2v2H4zM8 4h2v2H8zM0 8h2v2H0zM4 8h2v2H4zM8 8h2v2H8z" fill="#999"/></svg>
</footer>

<script>
const gap = '<td class="border-y-0! border-x-0! bg-[#ebebeb]"></td>';
const shut = '<td class="bg-[#f3f3f3]"></td>';
const open = '<td></td>';
const watch = '<svg class="h-[15px] w-[14px]"><use href="#watch"/></svg>';
const rows = [
  `<tr class="bg-[#f3faff]"><td class="border-r-[#3b93cf]!"></td><td class="border-[#3b93cf]!"><div class="flex items-center pl-[5px] font-['Noto_Sans',sans-serif] text-[11px]"><svg class="h-[5px] w-[10px] text-[#aaa]"><use href="#down"/></svg><svg class="mr-[5px] ml-[6px] size-4"><use href="#chart"/></svg>TimingChart (Print Control)</div></td>${shut}${gap}${shut.repeat(4)}<td><div class="overflow-hidden pl-[3px] font-['Noto_Sans',sans-serif] text-[11px] whitespace-nowrap">It shows the beh</div></td><td></td></tr>`,
  `<tr><td></td><td><div class="flex items-center pl-[15px] text-xs"><svg class="mr-[7px] h-[5px] w-[10px] text-[#aaa]"><use href="#down"/></svg>${watch}<span class="pl-[6px]">0</span></div></td>${shut}${gap}${shut.repeat(4)}${open}${open}</tr>`
];
for (const [life, state, on] of [['LED', 'LightsOut', ''], ['Printer', 'Idle', 'checked']]) {
  rows.push(`<tr><td></td><td><div class="flex items-center pl-[42px] font-['Noto_Sans',sans-serif] text-[11px]"><svg class="mr-[5px] h-[10px] w-[15px]"><use href="#shuffle"/></svg>Transition</div></td><td><div class="flex items-center gap-[2px] pl-[5px]"><svg class="h-[9px] w-4"><use href="#box"/></svg>${life}</div></td>${gap}<td><label class="relative mx-auto block size-[14px]"><input type="checkbox" ${on} aria-label="IsHidden ${life}" class="peer block size-[14px] appearance-none border border-[#666] bg-white checked:border-[#4a90e2]"><svg viewBox="0 0 14 14" class="absolute inset-0 hidden size-[14px] peer-checked:block"><path d="M3 7l3 3.500L11 3" fill="none" stroke="#222" stroke-width="2.200"/></svg></label></td><td><div class="flex items-center gap-[2px] pl-[5px]"><svg class="h-3 w-4"><use href="#hex"/></svg>${state}</div></td>${shut}${shut}${open}${open}</tr>`);
}
for (const t of [3, 5, 8, 10, 15, 20, 25, 28, 35, 37]) {
  const tri = t === 28 ? '<span class="mr-2 w-[5px]"></span>' : '<svg class="mr-2 h-[10px] w-[5px] text-[#aaa]"><use href="#right"/></svg>';
  rows.push(`<tr><td></td><td><div class="flex items-center pl-[19px] text-xs">${tri}${watch}<span class="pl-[6px]">${t}</span></div></td>${shut}${gap}${shut.repeat(4)}${open}${open}</tr>`);
}
document.getElementById('rows').innerHTML = rows.join('');
</script>
</body>
</html>
